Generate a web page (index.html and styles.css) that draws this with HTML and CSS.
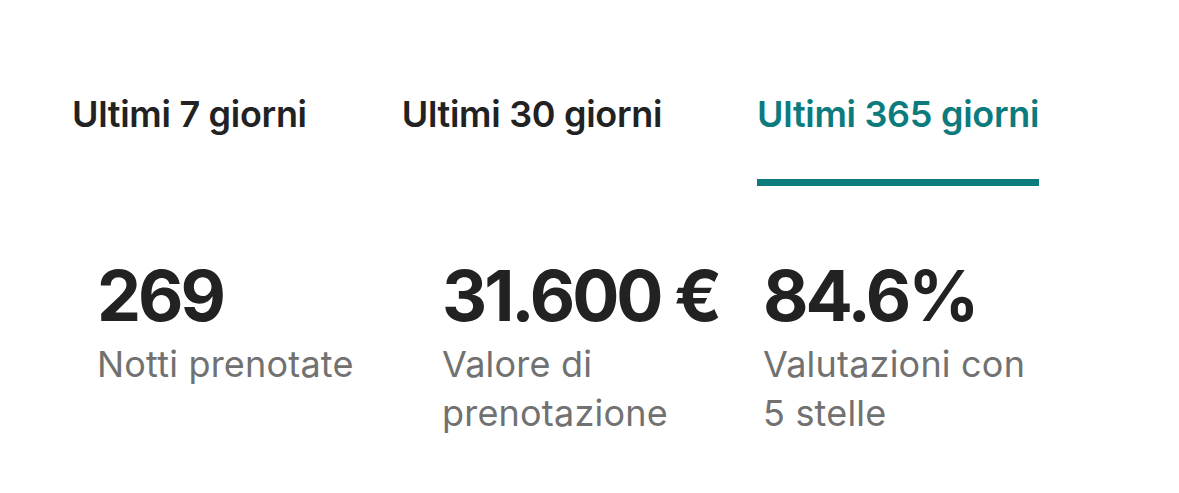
FILE: index.html
```html
<!DOCTYPE html>
<html lang="it">
<head>
<meta charset="utf-8">
<link rel="stylesheet" href="styles.css">
</head>
<body>
<div class="page">
  <nav class="tabs">
    <div class="tab">Ultimi 7 giorni</div>
    <div class="tab">Ultimi 30 giorni</div>
    <div class="tab active">Ultimi 365 giorni</div>
  </nav>
  <section class="stats">
    <div class="stat">
      <div class="value">269</div>
      <div class="label">Notti prenotate</div>
    </div>
    <div class="stat">
      <div class="value">31.600 €</div>
      <div class="label">Valore di prenotazione</div>
    </div>
    <div class="stat">
      <div class="value">84.6%</div>
      <div class="label">Valutazioni con 5 stelle</div>
    </div>
  </section>
</div>
</body>
</html>
```
FILE: styles.css
```css
html, body {
  margin: 0;
  padding: 0;
  background: #ffffff;
}
.page {
  font-family: Inter, "Noto Sans", sans-serif;
  color: #222222;
  padding-top: 90px;
}
.tabs {
  display: flex;
  gap: 95px;
  padding-left: 72px;
}
.tab {
  font-size: 36px;
  font-weight: 600;
  line-height: 48px;
  padding-bottom: 41px;
  letter-spacing: -0.3px;
  border-bottom: 7px solid transparent;
}
.tab.active {
  color: #0b7b7e;
  border-bottom-color: #0b7b7e;
}
.stats {
  display: grid;
  grid-template-columns: 345px 321px 265px;
  padding-left: 97px;
  margin-top: 70px;
}
.value {
  font-size: 70px;
  font-weight: 700;
  line-height: 80px;
  letter-spacing: -3px;
}
.label {
  font-size: 36px;
  font-weight: 400;
  line-height: 49px;
  letter-spacing: 0.2px;
  color: #717171;
  margin-top: 4px;
}
```
